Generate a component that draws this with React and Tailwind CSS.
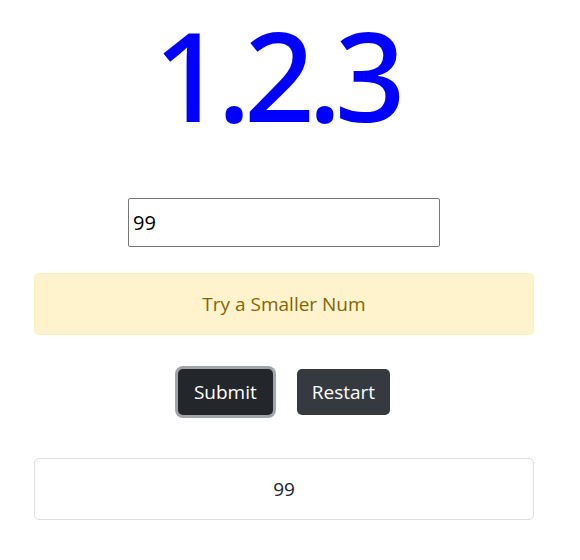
import { useState } from "react"

const App = () => {
  const [value, setValue] = useState("99")

  return (
    <div className="w-[568px] flex flex-col items-center bg-white" style={{ fontFamily: '"Open Sans", "Noto Sans", sans-serif' }}>
      {/* Version */}
      <h1
        className="text-[124px] leading-[1.2] pr-[16px] tracking-[-7px] text-[#0000ff] font-medium"
        style={{ fontFamily: '"Noto Sans", sans-serif' }}
      >
        1.2.3
      </h1>

      {/* Guess input */}
      <input
        type="text"
        value={value}
        onChange={(e) => setValue(e.target.value)}
        className="mt-[49px] w-[312px] h-[49px] border border-[#767676] rounded-[2px] px-[4px] text-[20px] text-black outline-none"
      />

      {/* Hint */}
      <div className="mt-[26px] w-[500px] h-[62px] flex items-center justify-center bg-[#fff3cd] border border-[#ffeeba] rounded-[5px] text-[19px] text-[#856404]">
        Try a Smaller Num
      </div>

      {/* Buttons */}
      <div className="mt-[34px] flex items-center gap-[24px]">
        <button className="h-[46px] px-[16px] rounded-[5px] bg-[#23272b] text-white text-[19px] ring-[3px] ring-[#a0a4a8]">
          Submit
        </button>
        <button className="h-[46px] px-[15px] rounded-[5px] bg-[#343a40] text-white text-[19px]">Restart</button>
      </div>

      {/* Last guess */}
      <div className="mt-[43px] w-[500px] h-[62px] flex items-center justify-center border border-[#dfdfdf] rounded-[5px] text-[19px] text-[#212529]">
        {value}
      </div>
    </div>
  )
}

export default App
